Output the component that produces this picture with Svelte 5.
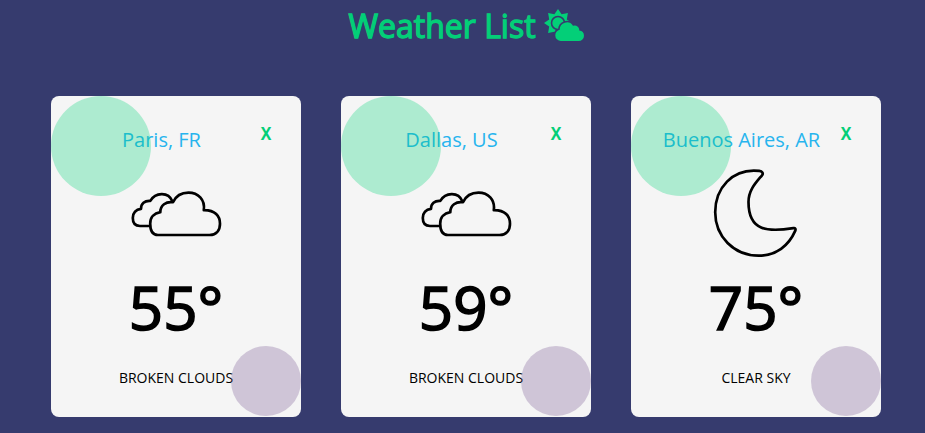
<script>
  const cities = [
    { name: 'Paris, FR', temp: 55, sky: 'BROKEN CLOUDS', icon: 'clouds' },
    { name: 'Dallas, US', temp: 59, sky: 'BROKEN CLOUDS', icon: 'clouds' },
    { name: 'Buenos Aires, AR', temp: 75, sky: 'CLEAR SKY', icon: 'moon' }
  ];
</script>

<main>
  <h1>
    <span>Weather List</span>
    <svg width="40" height="33" viewBox="0 0 40 33" aria-hidden="true">
      <path fill="currentColor" d="M14 0l3.600 5.200 6.300-1.100-1.100 6.300L28 14l-5.200 3.600 1.100 6.300-6.300-1.100L14 28l-3.600-5.200-6.300 1.100 1.100-6.300L0 14l5.200-3.600-1.100-6.300 6.300 1.100z" />
      <circle cx="14" cy="14" r="6.500" fill="none" stroke="#363b6e" stroke-width="1.600" />
      <g stroke="#363b6e" stroke-width="3" paint-order="stroke" fill="currentColor">
        <path d="M17 32a5.600 5.600 0 0 1-5.700-5.700c0-2.800 1.800-5 4.400-5.500a7.200 7.200 0 0 1 13.300-4 4.500 4.500 0 0 1 6.200 4.800A5.300 5.300 0 0 1 40 26.700 5.300 5.300 0 0 1 34.600 32z" />
      </g>
    </svg>
  </h1>
  <section class="list">
    {#each cities as city}
      <article class="card">
        <header>
          <h2>{city.name}</h2>
          <button aria-label="Remove city">x</button>
        </header>
        <div class="icon">
          <svg width="100" height="100" viewBox="0 0 100 100" fill="none" stroke="#000" stroke-width="2.7" stroke-linejoin="round" stroke-linecap="round">
            {#if city.icon === 'clouds'}
              <path d="M23.500 62H15C9.500 62 7.800 58.500 7.800 54c0-5 3.200-8.600 8.200-9.200 0-5.200 3.500-8.300 9.300-7.900 5-8.300 17.800-9.800 22.200.6" />
              <path d="M33 71h51.500C91.800 71 95 65.700 95 59.700c0-7.500-4.800-13.700-16.200-13.500C80.300 35.700 73 28.600 63.500 28.600c-7.300 0-12.700 3.600-15.500 9.600-7-1-12.700 3-12.700 10C29 49.200 25.200 53.500 25.200 59.700c0 6.500 2 11.300 7.800 11.300z" />
            {:else}
              <path d="M54.200 6.900C27 4 10.200 24.500 10.200 48.300c0 24 18.500 43.400 43.500 43.400 17.500 0 30-10 36.500-24.800.8-1.900.1-3-1.800-2.700C63.500 67.900 43.500 68 43.500 38c0-12 7.500-19.500 13.500-26.700 1.600-1.900.3-4-2.800-4.400z" />
            {/if}
          </svg>
        </div>
        <div class="temp">{city.temp}°</div>
        <p>{city.sky}</p>
        <i class="bubble green"></i>
        <i class="bubble purple"></i>
      </article>
    {/each}
  </section>
</main>

<style>
  :global(body) { background: #363b6e; overflow: hidden; }
  main { height: 433px; overflow: hidden; background: #363b6e; font-family: "Open Sans", sans-serif; }
  h1 { display: flex; justify-content: center; margin: 0; padding: 4px 0 0 7px; box-sizing: border-box; height: 96px; gap: 8px; color: #03cf78; font-size: 32px; line-height: 44px; font-weight: 400; white-space: nowrap; }
  h1 span { -webkit-text-stroke: 1.3px #03cf78; }
  h1 svg { margin-top: 5px; }
  .list { display: flex; gap: 40px; padding-left: 51px; }
  .card { position: relative; flex: none; width: 250px; height: 321px; border-radius: 8px; overflow: hidden; background: #f5f5f5; text-align: center; }
  header { position: relative; height: 68px; padding-top: 30px; box-sizing: border-box; }
  h2 { margin: 0; padding: 0 29px 0 0; font-size: 20px; line-height: 27px; font-weight: 400; color: #27b4ee; }
  button { position: absolute; top: 22px; right: 28px; width: 14px; padding: 0; border: 0; background: none; font: 600 20px/27px "Open Sans", sans-serif; color: #03cf78; transform: scaleY(1.15); }
  .icon { height: 100px; padding-right: 2px; }
  .icon svg { display: block; margin: 0 auto; }
  .temp { height: 104px; font-size: 60px; line-height: 87px; font-weight: 400; color: #000; -webkit-text-stroke: 1.6px #000; }
  p { margin: 0; font-size: 14px; line-height: 19px; color: #000; }
  .bubble { position: absolute; border-radius: 50%; pointer-events: none; }
  .green { top: 0; left: 0; width: 100px; height: 100px; background: rgba(8, 211, 122, 0.3); }
  .purple { right: 0; bottom: 1px; width: 70px; height: 70px; background: rgba(118, 85, 145, 0.3); }
</style>
